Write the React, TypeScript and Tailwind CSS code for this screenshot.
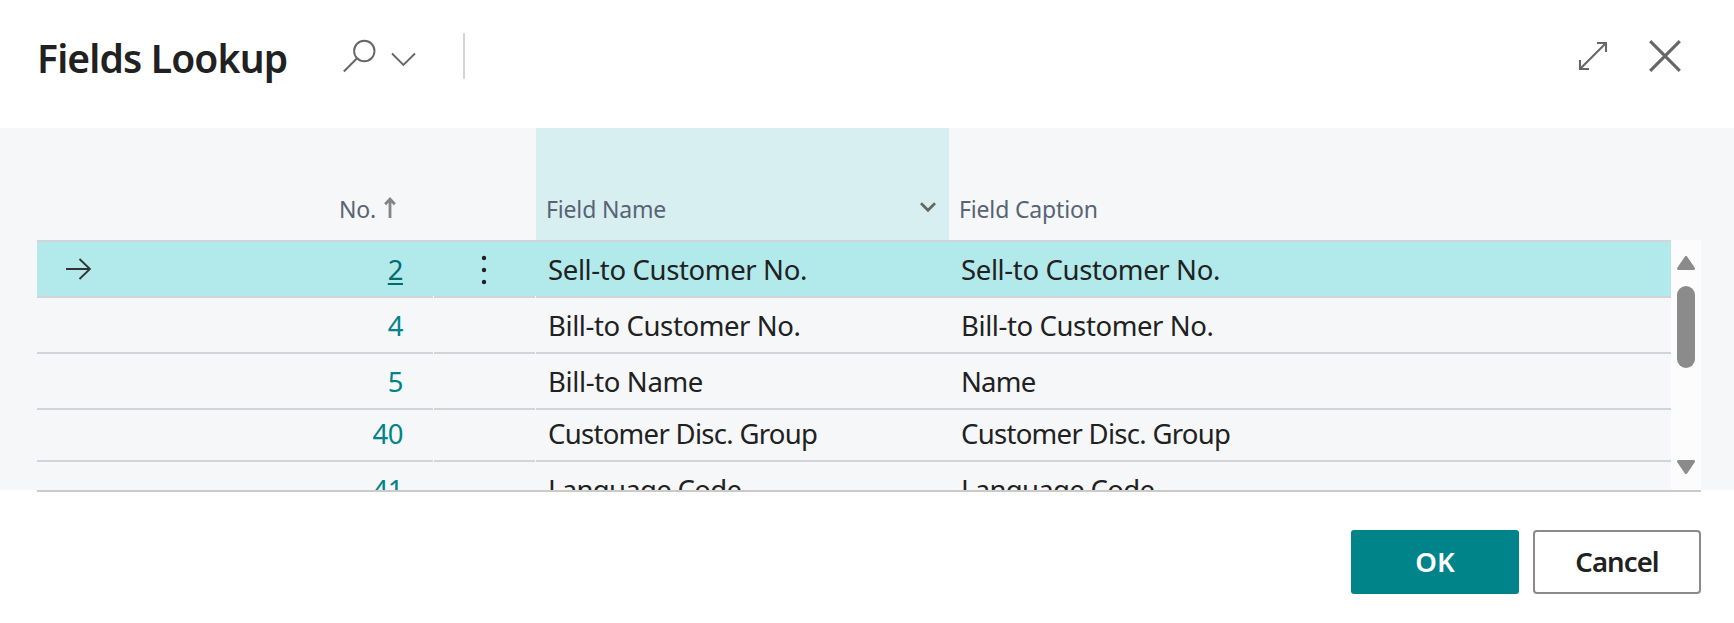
interface FieldRow {
  no: number;
  name: string;
  caption: string;
  height: string;
  nameTracking: string;
  captionTracking: string;
}

const rows: FieldRow[] = [
  { no: 2, name: "Sell-to Customer No.", caption: "Sell-to Customer No.", height: "h-14", nameTracking: "tracking-[-0.36px]", captionTracking: "tracking-[-0.36px]" },
  { no: 4, name: "Bill-to Customer No.", caption: "Bill-to Customer No.", height: "h-14", nameTracking: "tracking-[-0.4px]", captionTracking: "tracking-[-0.4px]" },
  { no: 5, name: "Bill-to Name", caption: "Name", height: "h-14", nameTracking: "tracking-[-0.36px]", captionTracking: "tracking-[-0.8px]" },
  { no: 40, name: "Customer Disc. Group", caption: "Customer Disc. Group", height: "h-[52px]", nameTracking: "tracking-[-0.7px]", captionTracking: "tracking-[-0.7px]" },
  { no: 41, name: "Language Code", caption: "Language Code", height: "h-14", nameTracking: "tracking-[-0.68px]", captionTracking: "tracking-[-0.68px]" },
];

const SearchIcon = () => (
  <svg className="h-[34px] w-[34px]" viewBox="0 0 34 34" fill="none" stroke="#666" strokeWidth="1.9">
    <circle cx="22.3" cy="12" r="10.2" />
    <path d="M14.8 19.5L1.8 32.5" />
  </svg>
);

const Header = () => (
  <header className="flex h-32 items-start justify-between pr-[53px] pl-[37px]">
    <div className="flex items-start">
      <h1 className="mt-[31px] w-[305px] text-[39px] leading-[54px] font-semibold tracking-[-0.85px] whitespace-nowrap text-[#212121]">
        Fields Lookup
      </h1>
      <button className="mt-[39px] flex items-start" aria-label="Search">
        <SearchIcon />
        <svg className="mt-[13px] ml-[15px] h-[15px] w-[26px]" viewBox="0 0 26 15" fill="none" stroke="#666" strokeWidth="1.9">
          <path d="M1 1.5L12.4 13L24 1.5" />
        </svg>
      </button>
      <div className="mt-[33px] ml-[46px] h-[46px] w-0.5 bg-[#d0d3da]" />
    </div>
    <div className="mt-10 flex items-start">
      <button aria-label="Expand">
        <svg className="mt-[1px] h-[30px] w-[30px]" viewBox="0 0 30 30" fill="none" stroke="#666" strokeWidth="2.1">
          <path d="M2 28L28 2M19 2H28V11M2 19V28H11" />
        </svg>
      </button>
      <button aria-label="Close" className="ml-[41px]">
        <svg className="h-8 w-8" viewBox="0 0 32 32" fill="none" stroke="#666" strokeWidth="3.1">
          <path d="M1.2 1.2L30.8 30.8M30.8 1.2L1.2 30.8" />
        </svg>
      </button>
    </div>
  </header>
);

const ColumnHeaders = () => (
  <div className="flex h-28 shrink-0 text-[23px] leading-8 tracking-[-0.16px] text-[#586374]">
    <div className="flex w-[499px] items-end pb-3.5 pl-[302px]">
      <span className="mb-[1px] w-[45px]">No.</span>
      <svg className="mb-2 h-[22px] w-3" viewBox="0 0 12 22" fill="none" stroke="#848484" strokeWidth="2.8">
        <path d="M6 22V4M1.2 8.2L6 3L10.8 8.2" />
      </svg>
    </div>
    <div className="flex w-[413px] items-end justify-between bg-[#d8eff2] pr-[13px] pb-[15px] pl-2.5">
      <span>Field Name</span>
      <svg className="mb-[12px] h-3 w-4" viewBox="0 0 16 12" fill="none" stroke="#666" strokeWidth="2.8">
        <path d="M1 2.2L8 9.2L15 2.2" />
      </svg>
    </div>
    <div className="flex items-end pb-[15px] pl-2.5">Field Caption</div>
  </div>
);

const Row = ({ row, selected }: { row: FieldRow; selected: boolean }) => {
  // text is pinned by its distance to the bottom line, rows differ in height
  const cell = "flex items-end border-b-2 border-[#d2d4db] pb-2";
  return (
    <div
      className={`flex shrink-0 gap-px text-[27.5px] leading-9 text-[#212121] ${row.height} ${
        selected ? "bg-[linear-gradient(#b2e9eb_54px,#f5f7f9_54px)]" : ""
      }`}
    >
      <div className={`${cell} w-[396px] justify-between pr-[30px] pl-[29px]`}>
        {selected ? (
          <svg className="mb-2 h-[22px] w-[25px]" viewBox="0 0 25 22" fill="none" stroke="#333" strokeWidth="1.9">
            <path d="M0 11H24M13.5 1L24 11L13.5 21" />
          </svg>
        ) : (
          <span />
        )}
        <a
          className={`tracking-[-0.5px] ${
            selected ? "text-[#006d70] underline decoration-2 underline-offset-[3px]" : "text-[#008489]"
          }`}
        >
          {row.no}
        </a>
      </div>
      <div className={`${cell} w-[101px] justify-center pr-px`}>
        {selected && (
          <svg className="mb-[3px] h-[30px] w-1.5" viewBox="0 0 6 30" fill="#212121">
            <circle cx="3" cy="3" r="2.2" />
            <circle cx="3" cy="15" r="2.2" />
            <circle cx="3" cy="27" r="2.2" />
          </svg>
        )}
      </div>
      <div className={`${cell} flex-1`}>
        <span className={`w-[413px] pl-3 ${row.nameTracking}`}>{row.name}</span>
        <span className={`pl-3 ${row.captionTracking}`}>{row.caption}</span>
      </div>
    </div>
  );
};

const Scrollbar = () => (
  <div className="flex w-[30px] shrink-0 flex-col items-center bg-[#fcfcfc] pt-4 pb-4">
    <svg className="h-3.5 w-[18px]" viewBox="0 0 18 14" fill="#8b8b8b" stroke="#8b8b8b" strokeWidth="3" strokeLinejoin="round">
      <path d="M9 1.5L16.5 12.5H1.5Z" />
    </svg>
    <div className="mt-4 h-[82px] w-[18px] rounded-full bg-[#8b8b8b]" />
    <svg className="mt-auto h-3.5 w-[18px]" viewBox="0 0 18 14" fill="#8b8b8b" stroke="#8b8b8b" strokeWidth="3" strokeLinejoin="round">
      <path d="M9 12.5L16.5 1.5H1.5Z" />
    </svg>
  </div>
);

const App = () => (
  <div className="h-[623px] w-[1734px] overflow-hidden bg-white font-['Noto_Sans',sans-serif]">
    <Header />
    <div className="h-[362px] bg-[#f5f7f9] pr-[33px] pl-[37px]">
      <ColumnHeaders />
      <div className="flex h-[250px]">
        <div className="flex flex-1 flex-col overflow-hidden border-t-2 border-[#d2d4db]">
          {rows.map((row) => (
            <Row key={row.no} row={row} selected={row.no === 2} />
          ))}
        </div>
        <Scrollbar />
      </div>
    </div>
    <div className="mr-[33px] ml-[37px] h-0.5 bg-[#cacaca]" />
    <footer className="mt-[38px] flex justify-end gap-3.5 pr-[33px] text-[27.5px] leading-9 font-semibold">
      <button className="h-16 w-[168px] rounded-[3px] bg-[#008489] text-white">OK</button>
      <button className="h-16 w-[168px] rounded-[4px] border-2 border-[#8a8a8a] tracking-[-0.9px] text-[#212121]">Cancel</button>
    </footer>
  </div>
);

export default App;
